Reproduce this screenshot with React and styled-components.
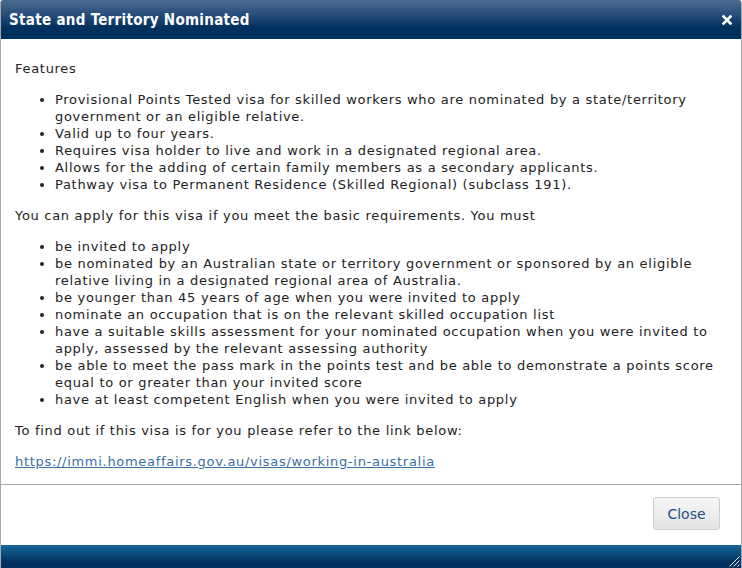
import React from "react";
import styled, { createGlobalStyle } from "styled-components";

const GlobalStyle = createGlobalStyle`
  *, *::before, *::after {
    box-sizing: border-box;
  }
  html, body {
    margin: 0;
    padding: 0;
    background: #ffffff;
  }
  body {
    font-family: "DejaVu Sans", Verdana, sans-serif;
  }
`;

const features = [
  "Provisional Points Tested visa for skilled workers who are nominated by a state/territory government or an eligible relative.",
  "Valid up to four years.",
  "Requires visa holder to live and work in a designated regional area.",
  "Allows for the adding of certain family members as a secondary applicants.",
  "Pathway visa to Permanent Residence (Skilled Regional) (subclass 191).",
];

// the skills line breaks after "invited to" in the original layout
const requirements = [
  ["be invited to apply"],
  ["be nominated by an Australian state or territory government or sponsored by an eligible relative living in a designated regional area of Australia."],
  ["be younger than 45 years of age when you were invited to apply"],
  ["nominate an occupation that is on the relevant skilled occupation list"],
  [
    "have a suitable skills assessment for your nominated occupation when you were invited to",
    "apply, assessed by the relevant assessing authority",
  ],
  ["be able to meet the pass mark in the points test and be able to demonstrate a points score equal to or greater than your invited score"],
  ["have at least competent English when you were invited to apply"],
];

export default function App() {
  return (
    <>
      <GlobalStyle />
      <Dialog>
        <TitleBar>
          <Title>State and Territory Nominated</Title>
          <CloseIcon aria-label="close">
            <svg width="10" height="10" viewBox="0 0 10 10">
              <path
                d="M1.5 1.5 L8.5 8.5 M8.5 1.5 L1.5 8.5"
                stroke="#ffffff"
                strokeWidth="2.6"
                strokeLinecap="square"
              />
            </svg>
          </CloseIcon>
        </TitleBar>
        <Content>
          <Para>Features</Para>
          <List>
            {features.map((f) => (
              <li key={f}>{f}</li>
            ))}
          </List>
          <Para>
            You can apply for this visa if you meet the basic requirements. You
            must
          </Para>
          <List>
            {requirements.map((r) => (
              <li key={r[0]}>
                {r[0]}
                {r[1] && (
                  <>
                    <br />
                    {r[1]}
                  </>
                )}
              </li>
            ))}
          </List>
          <Para>To find out if this visa is for you please refer to the link below:</Para>
          <Para>
            <Link href="#">https://immi.homeaffairs.gov.au/visas/working-in-australia</Link>
          </Para>
        </Content>
        <Footer>
          <Button>Close</Button>
        </Footer>
        <BottomBar>
          <Grip width="12" height="12" viewBox="0 0 12 12">
            <path
              d="M11.5 1.5 L1.5 11.5 M11.5 5.5 L5.5 11.5 M11.5 9.5 L9.5 11.5"
              stroke="#e8eef4"
              strokeWidth="1"
            />
          </Grip>
        </BottomBar>
      </Dialog>
    </>
  );
}

const Dialog = styled.div`
  height: 568px;
  display: flex;
  flex-direction: column;
  border-left: 1px solid #a9a9a9;
  border-right: 1px solid #a9a9a9;
  border-radius: 3px 3px 0 0;
  overflow: hidden;
  color: #222222;
`;

const TitleBar = styled.div`
  height: 39px;
  flex-shrink: 0;
  display: flex;
  align-items: center;
  justify-content: space-between;
  padding: 0 9px 0 8px;
  background: linear-gradient(to bottom, #4b6b90 0%, #2a4f7c 35%, #00305f 72%, #00305f 100%);
`;

const Title = styled.span`
  color: #ffffff;
  font-family: "DejaVu Sans Condensed", "DejaVu Sans", sans-serif;
  font-stretch: condensed;
  font-weight: bold;
  font-size: 15px;
  letter-spacing: 0.3px;
`;

const CloseIcon = styled.span`
  display: flex;
  align-items: center;
  margin-top: 1px;
`;

const Content = styled.div`
  flex: 1;
  min-height: 0;
  padding: 7px 15px 0 14px;
  font-size: 13px;
  line-height: 17px;
  letter-spacing: 0.7px;
`;

const Para = styled.p`
  margin: 14px 0;
`;

const List = styled.ul`
  margin: 14px 0;
  padding-left: 40px;
`;

const Link = styled.a`
  color: #3a6ea5;
  text-decoration: underline;
`;

const Footer = styled.div`
  height: 61px;
  flex-shrink: 0;
  border-top: 1px solid #aaaaaa;
  display: flex;
  align-items: flex-start;
  justify-content: flex-end;
  padding: 12px 21px 0 0;
`;

const Button = styled.button`
  width: 67px;
  height: 33px;
  border: 1px solid #cccccc;
  border-radius: 3px;
  background: linear-gradient(to bottom, #f6f6f6, #e4e4e4);
  color: #1d4f85;
  font-family: "DejaVu Sans", Verdana, sans-serif;
  font-size: 14px;
  cursor: pointer;
`;

const BottomBar = styled.div`
  height: 23px;
  flex-shrink: 0;
  display: flex;
  align-items: flex-end;
  justify-content: flex-end;
  background: linear-gradient(to bottom, #1a6799 0%, #0a4a7c 40%, #00305f 75%, #00305f 100%);
`;

const Grip = styled.svg`
  margin: 0 1px 1px 0;
`;
